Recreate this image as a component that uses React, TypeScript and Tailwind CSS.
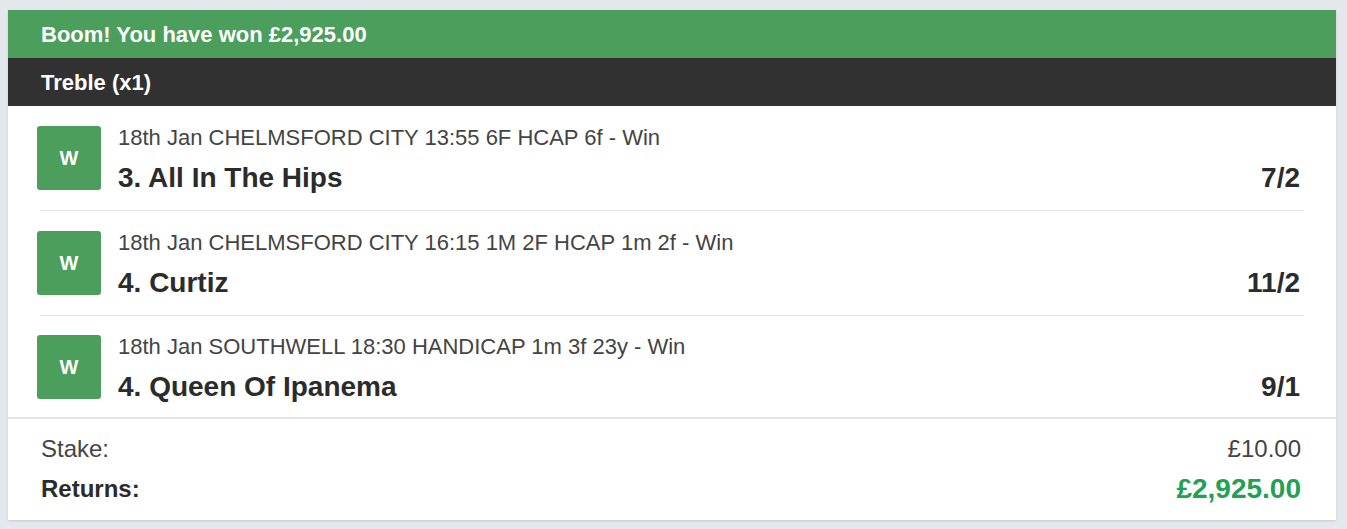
const legs = [
  {
    meta: "18th Jan CHELMSFORD CITY 13:55 6F HCAP 6f - Win",
    name: "3. All In The Hips",
    odds: "7/2",
  },
  {
    meta: "18th Jan CHELMSFORD CITY 16:15 1M 2F HCAP 1m 2f - Win",
    name: "4. Curtiz",
    odds: "11/2",
  },
  {
    meta: "18th Jan SOUTHWELL 18:30 HANDICAP 1m 3f 23y - Win",
    name: "4. Queen Of Ipanema",
    odds: "9/1",
  },
];

export default function App() {
  return (
    <div
      className="min-h-[529px] bg-[#e4e7eb] pt-[10px] pb-[10px]"
      style={{ fontFamily: '"Liberation Sans", Arial, sans-serif' }}
    >
      <div className="ml-[8px] mr-[11px] bg-white shadow-[0_1px_2px_rgba(0,0,0,0.12)]">
        {/* banner */}
        <div className="flex h-[48px] items-center bg-[#4b9e5c] pl-[33px] text-[22px] font-bold text-white">
          Boom! You have won £2,925.00
        </div>
        <div className="flex h-[48px] items-center bg-[#313131] pl-[33px] text-[22px] font-bold text-white">
          Treble (x1)
        </div>

        {/* legs */}
        <div>
          {legs.map((leg, idx) => {
            const last = idx === legs.length - 1;
            return (
              <div
                key={leg.name}
                className={last ? "mx-[32px]" : "mx-[32px] border-b border-[#e1e4e8]"}
              >
                <div
                  className={
                    last
                      ? "flex items-start pt-[19px] pb-[18px] pr-[4px]"
                      : "flex items-start py-[20px] pr-[4px]"
                  }
                >
                  <div className="-ml-[3px] flex h-[64px] w-[64px] shrink-0 items-center justify-center rounded-[3px] bg-[#4b9e5c] text-[20px] font-bold text-white">
                    W
                  </div>
                  <div className="ml-[17px] h-[64px] flex-1">
                    <div className="-mt-[1px] text-[22px] leading-[26px] text-[#444]">
                      {leg.meta}
                    </div>
                    <div className="mt-[13px] flex items-center justify-between text-[28px] font-bold leading-[28px] text-[#2b2b2b]">
                      <span>{leg.name}</span>
                      <span>{leg.odds}</span>
                    </div>
                  </div>
                </div>
              </div>
            );
          })}
        </div>

        {/* totals */}
        <div className="border-t-2 border-[#e1e4e8] pt-[10px] pb-[11px] pl-[33px] pr-[35px]">
          <div className="flex items-center justify-between text-[24px] leading-[40px] text-[#444]">
            <span>Stake:</span>
            <span>£10.00</span>
          </div>
          <div className="flex items-center justify-between leading-[40px]">
            <span className="text-[24px] font-bold text-[#2b2b2b]">Returns:</span>
            <span className="text-[28px] font-bold text-[#22a152]">£2,925.00</span>
          </div>
        </div>
      </div>
    </div>
  );
}
